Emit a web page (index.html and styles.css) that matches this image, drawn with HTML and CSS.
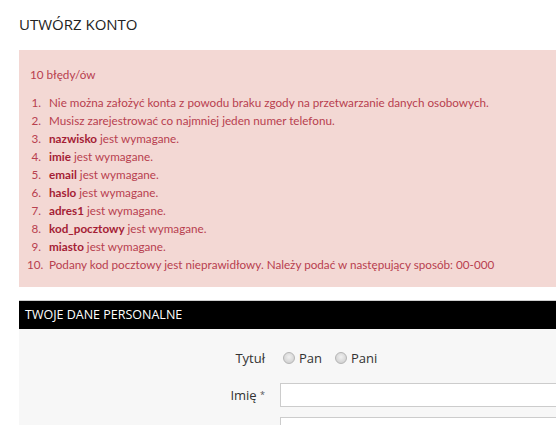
FILE: index.html
```html
<!DOCTYPE html>
<html lang="pl">
<head>
<meta charset="utf-8">
<title>Utwórz konto</title>
<link rel="stylesheet" href="styles.css">
</head>
<body>
<div class="page">
  <h1 class="page-title">UTWÓRZ KONTO</h1>
  <div class="alert">
    <p class="alert-count">10 błędy/ów</p>
    <ol class="alert-list">
      <li>Nie można założyć konta z powodu braku zgody na przetwarzanie danych osobowych.</li>
      <li>Musisz zarejestrować co najmniej jeden numer telefonu.</li>
      <li><b>nazwisko</b> jest wymagane.</li>
      <li><b>imie</b> jest wymagane.</li>
      <li><b>email</b> jest wymagane.</li>
      <li><b>haslo</b> jest wymagane.</li>
      <li><b>adres1</b> jest wymagane.</li>
      <li><b>kod_pocztowy</b> jest wymagane.</li>
      <li><b>miasto</b> jest wymagane.</li>
      <li>Podany kod pocztowy jest nieprawidłowy. Należy podać w następujący sposób: 00-000</li>
    </ol>
  </div>
  <section class="box">
    <h2 class="box-title">TWOJE DANE PERSONALNE</h2>
    <div class="form">
      <div class="row row-radio">
        <span class="label">Tytuł</span>
        <div class="radios">
          <label class="radio"><span class="dot"></span>Pan</label>
          <label class="radio"><span class="dot"></span>Pani</label>
        </div>
      </div>
      <div class="row">
        <span class="label">Imię <sup class="req">*</sup></span>
        <input class="input" type="text">
      </div>
      <div class="row">
        <span class="label"></span>
        <input class="input" type="text">
      </div>
    </div>
  </section>
</div>
</body>
</html>
```
FILE: styles.css
```css
html, body {
  margin: 0;
  padding: 0;
  background: #ffffff;
  overflow: hidden;
}
.page {
  padding: 0 0 0 19px;
}
.page-title {
  margin: 0;
  padding-top: 14px;
  height: 36px;
  font-family: "Open Sans", sans-serif;
  font-weight: 400;
  font-size: 15px;
  line-height: 20px;
  color: #222;
  box-sizing: border-box;
}
.alert {
  background: #f3d8d4;
  color: #b8404f;
  font-family: "Lato", "Liberation Sans", sans-serif;
  font-size: 11.7px;
  line-height: 18px;
  padding: 15px 11px 14px 11px;
  margin-top: 14px;
}
.alert-count {
  margin: 0 0 10px;
}
.alert-list {
  margin: 0;
  padding: 0 0 0 19px;
  list-style: none;
  counter-reset: err;
}
.alert-list li {
  counter-increment: err;
}
.alert-list li::before {
  content: counter(err) ".";
  display: inline-block;
  width: 14px;
  margin-left: -22px;
  margin-right: 8px;
  text-align: right;
  color: #b8404f;
}
.alert-list b {
  color: #a51d35;
  font-weight: 700;
}
.box {
  margin-top: 13px;
  border-top: 1px solid #cfcfcf;
}
.box-title {
  margin: 0;
  background: #000;
  color: #fff;
  font-family: "Open Sans", sans-serif;
  font-weight: 400;
  font-size: 12.5px;
  line-height: 28px;
  padding-left: 6px;
}
.form {
  background: #f7f7f7;
  padding-top: 16px;
  height: 120px;
  font-family: "Open Sans", sans-serif;
  font-size: 13px;
  color: #333;
  overflow: hidden;
}
.row {
  display: grid;
  grid-template-columns: 246px 1fr;
  column-gap: 15px;
  align-items: center;
  margin-bottom: 10px;
}
.row-radio {
  height: 26px;
  margin-bottom: 12px;
}
.label {
  text-align: right;
}
.req {
  font-size: 9px;
  color: #555;
  vertical-align: 2px;
}
.radios {
  display: flex;
  gap: 13px;
  padding-left: 3px;
}
.radio {
  display: flex;
  align-items: center;
  gap: 4px;
}
.dot {
  width: 10px;
  height: 10px;
  border-radius: 50%;
  border: 1px solid #b5b5b5;
  background: radial-gradient(circle at 50% 40%, #f0f0f0, #c9c9c9);
}
.input {
  height: 24px;
  box-sizing: border-box;
  border: 1px solid #cccccc;
  background: #fff;
  width: calc(100% + 20px);
  margin: 0;
  padding: 0;
}
```
